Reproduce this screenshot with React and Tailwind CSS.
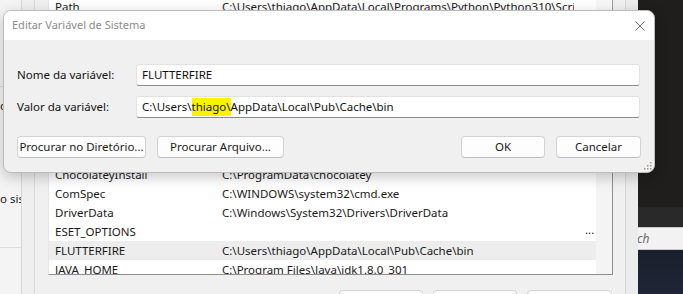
import React from "react"

const font = "font-['Noto_Sans',sans-serif]"

function ListRow({ name, value, selected, more }) {
  return (
    <div className={`flex h-[19px] shrink-0 items-center whitespace-nowrap ${selected ? "bg-[#ededed]" : ""}`}>
      <div className="w-[173px] shrink-0 overflow-hidden pl-[6px]">{name}</div>
      <div className="w-[352px] shrink-0 overflow-hidden">{value}</div>
      {more && <div className="ml-[11px] pb-[4px] leading-none">...</div>}
    </div>
  )
}

function WinButton({ children, className }) {
  return (
    <div className={`flex h-[22px] items-center justify-center whitespace-nowrap rounded-[4px] border border-[#d3d3d3] border-b-[#c0c0c0] bg-[#fdfdfd] text-[11.5px] text-[#1a1a1a] ${className}`}>
      {children}
    </div>
  )
}

function Field({ label, children }) {
  return (
    <div className="flex items-center">
      <div className="w-[119px] shrink-0 text-[11.5px] text-[#111]">{label}</div>
      <div className="flex h-[22px] flex-1 items-center whitespace-nowrap rounded-[3px] border border-[#e2e2e2] border-b-[#8a8a8a] bg-white px-[5px] text-[11.5px] text-[#111]">
        {children}
      </div>
    </div>
  )
}

export default function App() {
  return (
    <div className={`relative flex h-[294px] w-[683px] overflow-hidden bg-[#f0f0f0] text-[11.5px] text-[#1a1a1a] ${font}`}>
      {/* window behind, far left */}
      <div className="flex w-[22px] shrink-0 flex-col overflow-hidden whitespace-nowrap border-r border-[#d6d6d6] bg-[#f4f4f4]">
        <div className="mt-[86px] border-t border-[#dcdcdc]" />
        <div className="mt-[10px] h-[18px]">o</div>
        <div className="mt-[75px] h-[18px]">o sist</div>
        <div className="mt-[39px] border-t border-[#dcdcdc]" />
      </div>
      <div className="w-[12px] shrink-0 bg-[#efefef]" />

      {/* environment variables window */}
      <div className="flex w-[592px] shrink-0 flex-col border-x border-[#d8d8d8] bg-[#f0f0f0] pl-[13px] pr-[12px]">
        <div className="flex h-[120px] shrink-0 overflow-hidden border-x border-b border-[#e6e6e6] border-r-[#9a9a9a] bg-white">
          <div className="-mt-[3px] flex w-[547px] flex-col">
            <ListRow name="Path" value="C:\Users\thiago\AppData\Local\Programs\Python\Python310\Scripts\;C:\Users\thiago" />
          </div>
          <div className="flex-1 bg-[#f7f7f7]" />
        </div>
        <div className="h-[20px] shrink-0" />
        <div className="flex h-[135px] shrink-0 overflow-hidden border border-[#e6e6e6] border-b-[#8f8f8f] border-r-[#8f8f8f] bg-white">
          <div className="flex w-[547px] flex-col pt-[24px]">
            <ListRow name="ChocolateyInstall" value="C:\ProgramData\chocolatey" />
            <ListRow name="ComSpec" value="C:\WINDOWS\system32\cmd.exe" />
            <ListRow name="DriverData" value="C:\Windows\System32\Drivers\DriverData" />
            <ListRow name="ESET_OPTIONS" value="" more />
            <ListRow name="FLUTTERFIRE" value="C:\Users\thiago\AppData\Local\Pub\Cache\bin" selected />
            <ListRow name="JAVA_HOME" value="C:\Program Files\Java\jdk1.8.0_301" />
          </div>
          <div className="flex-1 bg-[#f4f4f4]" />
        </div>
        <div className="mt-[15px] flex shrink-0 justify-end gap-[10px] pr-[1px]">
          <div className="h-[23px] w-[84px] rounded-[4px] border border-[#d3d3d3] bg-[#fdfdfd]" />
          <div className="h-[23px] w-[84px] rounded-[4px] border border-[#d3d3d3] bg-[#fdfdfd]" />
          <div className="h-[23px] w-[85px] rounded-[4px] border border-[#d3d3d3] bg-[#fdfdfd]" />
        </div>
      </div>
      <div className="w-[12px] shrink-0 bg-[#ececec]" />

      {/* dark app on the right */}
      <div className="flex w-[45px] shrink-0 flex-col">
        <div className="h-[207px] bg-[#1f1e1c]" />
        <div className="h-[20px] bg-[#292929]" />
        <div className="flex h-[23px] items-center overflow-hidden whitespace-nowrap border-y border-[#c9c9c9] bg-[#f2f2f2] text-[12px] italic text-[#6a6a6a]">
          <span className="-ml-[1px]">ch</span>
        </div>
        <div className="flex-1 bg-gradient-to-b from-[#1a1f2c] to-[#202637]" />
      </div>

      {/* dialog */}
      <div className="absolute left-[3px] top-[10px] flex h-[163px] w-[652px] flex-col overflow-hidden rounded-[8px] border border-[#bdbdbd] bg-[#f0f0f0] shadow-[0_4px_14px_rgba(0,0,0,0.22)]">
        <div className="flex h-[29px] shrink-0 items-center justify-between bg-white pl-[8px] pr-[9px]">
          <span className="text-[11px] text-[#8c8c8c]">Editar Variável de Sistema</span>
          <svg width="10" height="10" viewBox="0 0 10 10">
            <path d="M0.5 0.5L9.5 9.5M9.5 0.5L0.5 9.5" stroke="#7a7a7a" strokeWidth="1" fill="none" />
          </svg>
        </div>
        <div className="relative flex flex-1 flex-col pl-[13px] pr-[14px] pt-[24px]">
          <Field label="Nome da variável:">FLUTTERFIRE</Field>
          <div className="mt-[10px]">
            <Field label="Valor da variável:">
              C:\Users\<span className="bg-[#fff200]">thiago\</span>AppData\Local\Pub\Cache\bin
            </Field>
          </div>
          <div className="mt-[18px] flex">
            <WinButton className="w-[129px]">Procurar no Diretório...</WinButton>
            <WinButton className="ml-[11px] w-[127px]">Procurar Arquivo...</WinButton>
            <WinButton className="ml-auto w-[84px]">OK</WinButton>
            <WinButton className="ml-[11px] mr-[-1px] w-[85px]">Cancelar</WinButton>
          </div>
          <svg className="absolute bottom-[2px] right-[2px]" width="8" height="8" viewBox="0 0 8 8">
            <g fill="#9a9a9a">
              <rect x="6" y="0" width="1.5" height="1.5" />
              <rect x="3" y="3" width="1.5" height="1.5" />
              <rect x="6" y="3" width="1.5" height="1.5" />
              <rect x="0" y="6" width="1.5" height="1.5" />
              <rect x="3" y="6" width="1.5" height="1.5" />
              <rect x="6" y="6" width="1.5" height="1.5" />
            </g>
          </svg>
        </div>
      </div>
    </div>
  )
}
